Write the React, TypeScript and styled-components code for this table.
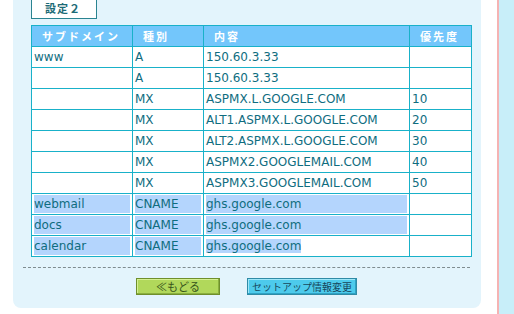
import styled, { createGlobalStyle } from 'styled-components'

const Global = createGlobalStyle`
    html, body {
        margin: 0;
        padding: 0;
        background: #ffffff;
    }
    body {
        font-family: "DejaVu Sans", Verdana, sans-serif;
    }
`

const Page = styled.div`
    display: flex;
    height: 314px;
    padding-left: 13px;
    overflow: hidden;
`

const Panel = styled.div`
    width: 450px;
    height: 308px;
    padding: 0 0 0 18px;
    background: #e3f4fc;
    border-radius: 0 0 8px 8px;
    display: flex;
    flex-direction: column;
`

const Tab = styled.div`
    width: 64px;
    height: 18px;
    border: 1px solid #2a8491;
    border-top: none;
    background: #ffffff;
    color: #1d6b77;
    font-family: "Noto Sans CJK JP", sans-serif;
    font-size: 11px;
    font-weight: bold;
    letter-spacing: 1px;
    line-height: 17px;
    text-indent: 13px;
`

const Table = styled.table`
    margin-top: 6px;
    width: 440px;
    border-collapse: collapse;
    table-layout: fixed;
    background: #ffffff;
`

const Th = styled.th`
    height: 20px;
    padding: 0 0 0 10px;
    background: #73c6fb;
    border: 1px solid #19b1c9;
    color: #ffffff;
    font-family: "Noto Sans CJK JP", sans-serif;
    font-size: 11px;
    font-weight: bold;
    letter-spacing: 2px;
    text-align: left;
    line-height: 20px;
`

const Td = styled.td`
    padding: 1px 2px;
    border: 1px solid #19b1c9;
    color: #0f6d7f;
    font-size: 12px;
    line-height: 18px;
    white-space: nowrap;
    overflow: hidden;
`

const Sel = styled.span<{ $full?: boolean }>`
    display: ${p => (p.$full ? 'block' : 'inline')};
    background: #b4d5fd;
`

const Rule = styled.div`
    margin: 10px 0 0 -8px;
    width: 447px;
    border-top: 1px dashed #7f8c90;
`

const Buttons = styled.div`
    display: flex;
    justify-content: center;
    gap: 27px;
    margin: 10px 0 0 -18px;
    padding-right: 1px;
`

const Button = styled.div<{ $tone: 'green' | 'cyan' }>`
    box-sizing: border-box;
    height: 17px;
    padding: 0 ${p => (p.$tone === 'green' ? '19px' : '4px')};
    background: ${p => (p.$tone === 'green' ? '#b1d85b' : '#4dcbec')};
    border: 1px solid ${p => (p.$tone === 'green' ? '#6f8f2c' : '#2f8ba6')};
    box-shadow: inset -1px -1px 0 ${p => (p.$tone === 'green' ? '#8aaf3f' : '#2ea2c4')},
        inset 1px 1px 0 ${p => (p.$tone === 'green' ? '#d4ef93' : '#9ee6f8')};
    color: ${p => (p.$tone === 'green' ? '#36541a' : '#17475c')};
    font-family: "Noto Sans CJK JP", sans-serif;
    font-size: ${p => (p.$tone === 'green' ? '11px' : '10px')};
    line-height: 15px;
    white-space: nowrap;
`

const Gap = styled.div`
    width: 16px;
`

const Side = styled.div`
    width: 15px;
    height: 314px;
    border-left: 2px solid #f5b3b3;
    background: #c8eef9;
`

interface Row {
    sub: string
    type: string
    value: string
    prio: string
    sel?: boolean
}

const rows: Row[] = [
    { sub: 'www', type: 'A', value: '150.60.3.33', prio: '' },
    { sub: '', type: 'A', value: '150.60.3.33', prio: '' },
    { sub: '', type: 'MX', value: 'ASPMX.L.GOOGLE.COM', prio: '10' },
    { sub: '', type: 'MX', value: 'ALT1.ASPMX.L.GOOGLE.COM', prio: '20' },
    { sub: '', type: 'MX', value: 'ALT2.ASPMX.L.GOOGLE.COM', prio: '30' },
    { sub: '', type: 'MX', value: 'ASPMX2.GOOGLEMAIL.COM', prio: '40' },
    { sub: '', type: 'MX', value: 'ASPMX3.GOOGLEMAIL.COM', prio: '50' },
    { sub: 'webmail', type: 'CNAME', value: 'ghs.google.com', prio: '', sel: true },
    { sub: 'docs', type: 'CNAME', value: 'ghs.google.com', prio: '', sel: true },
    { sub: 'calendar', type: 'CNAME', value: 'ghs.google.com', prio: '', sel: true },
]

function App() {
    return (
        <Page>
            <Global />
            <Panel>
                <Tab>設定２</Tab>
                <Table>
                    <colgroup>
                        <col style={{ width: 101 }} />
                        <col style={{ width: 71 }} />
                        <col style={{ width: 206 }} />
                        <col style={{ width: 62 }} />
                    </colgroup>
                    <thead>
                        <tr>
                            <Th>サブドメイン</Th>
                            <Th>種別</Th>
                            <Th>内容</Th>
                            <Th>優先度</Th>
                        </tr>
                    </thead>
                    <tbody>
                        {rows.map((r, i) => {
                            const last = i === rows.length - 1
                            return (
                                <tr key={i}>
                                    <Td>{r.sel ? <Sel $full>{r.sub}</Sel> : r.sub || '\u00a0'}</Td>
                                    <Td>{r.sel ? <Sel $full>{r.type}</Sel> : r.type}</Td>
                                    <Td>{r.sel ? <Sel $full={!last}>{r.value}</Sel> : r.value}</Td>
                                    <Td>{r.prio || '\u00a0'}</Td>
                                </tr>
                            )
                        })}
                    </tbody>
                </Table>
                <Rule />
                <Buttons>
                    <Button $tone="green">≪もどる</Button>
                    <Button $tone="cyan">セットアップ情報変更</Button>
                </Buttons>
            </Panel>
            <Gap />
            <Side />
        </Page>
    )
}

export default App
